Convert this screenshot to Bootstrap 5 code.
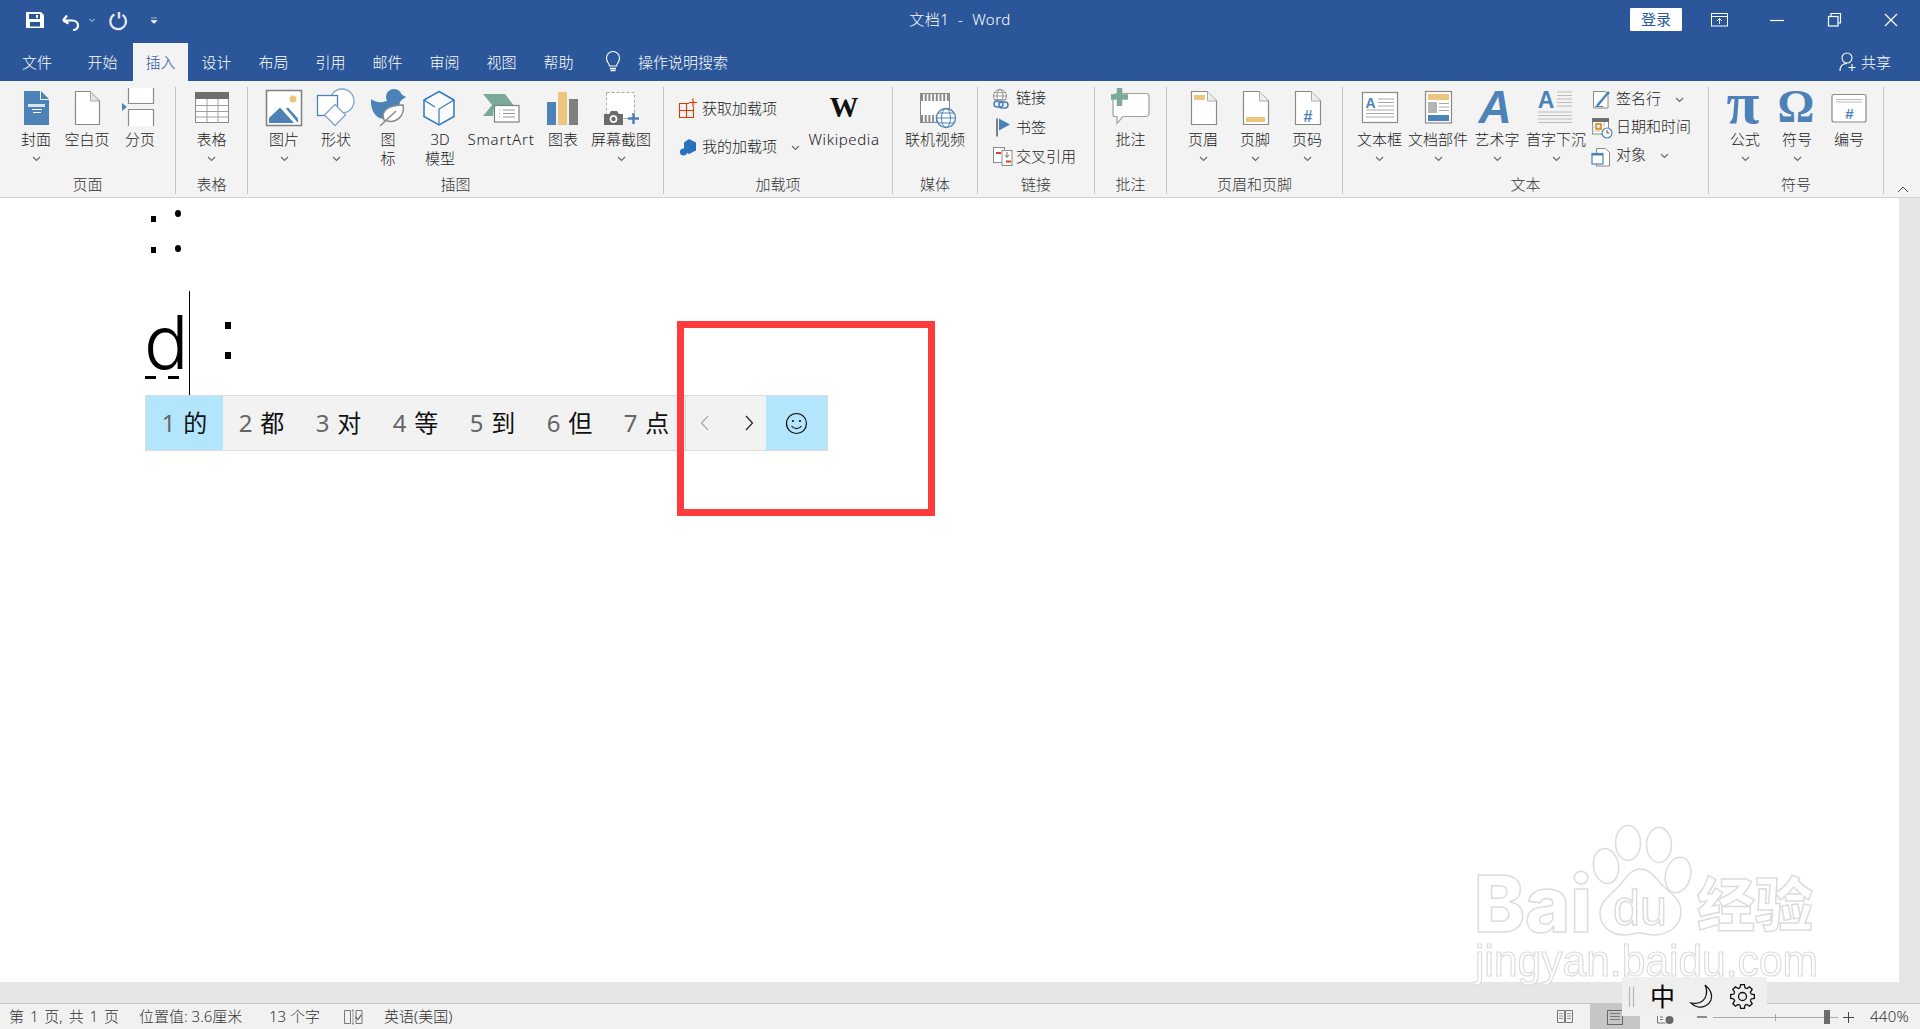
<!DOCTYPE html>
<html lang="zh-CN">
<head>
<meta charset="utf-8">
<title>文档1 - Word</title>
<link href="https://cdn.jsdelivr.net/npm/bootstrap@5.3.0/dist/css/bootstrap.min.css" rel="stylesheet">
<style>
html,body{height:100%;overflow:hidden}
body{font-family:"Noto Sans","Noto Sans CJK SC",sans-serif;font-size:15px;font-weight:300;color:#222;background:#fff}
svg{display:block;flex:none;overflow:visible}
.wd-page{width:1920px;height:1029px}
.wd-title{height:43px;background:#2b579a;color:#fff}
.wd-side{flex:1 1 0}
.wd-titletext{font-size:15px;line-height:38px;letter-spacing:.5px}
.wd-login{width:52px;height:23px;padding:0;border:0;border-radius:1px;background:#fff;color:#2b579a;font-size:15px;line-height:23px}
.wd-tabs{height:38px;background:#2b579a;color:#fff}
.wd-tab{width:57px;height:38px;padding:0;line-height:38px;text-align:center;color:#fff}
.wd-tab-first{width:74px}
.wd-tab-on{width:55px;background:#f3f3f3;color:#2b579a;margin-left:2px}
.wd-search{margin-left:17px;gap:16px;line-height:38px}
.wd-share{gap:4px;padding-right:29px;line-height:38px}
.wd-ribbon{height:117px;background:#f3f3f3;border-bottom:1px solid #d4d4d4;padding-top:6px}
.wd-grp{height:107px;border-right:1px solid #c4c4c4}
.wd-grp-name{line-height:19px;text-align:center;color:#333}
.wd-grp-top{flex:1 1 auto;padding-top:1px}
.wd-btn{line-height:19px;text-align:center;white-space:nowrap}
.wd-btn .wd-lb{height:19px;display:flex;justify-content:center;align-items:center}
.wd-btn svg+.wd-lb{margin-top:-2px}
.wd-pl{padding-left:10px}
.g72{width:72px}.g85{width:85px}.g116{width:117px}.g176{width:176px}.g416{width:416px}.g229{width:229px}
.g366{width:366px}.g175{width:175px}
.w52{width:52px}.w50{width:50px}.w56{width:56px}.w54{width:54px}.w62{width:62px}.w70{width:70px}.w72{width:72px}.w60{width:60px}.w57{width:57px}.w58{width:58px}.w84{width:84px}
.wd-lspc{letter-spacing:.8px}
.wd-lspw{letter-spacing:.6px}
.wd-row{height:24px;line-height:24px;white-space:nowrap}
.wd-row span{margin-top:-4px}
.wd-col-a{padding:9.5px 0 0 14px;width:144px;gap:14.5px}
.wd-col-b{padding:0 0 0 14px;gap:5.5px}
.wd-col-c{padding:0 0 0 5px;gap:4px}
.gp4{gap:4px}.gp3{gap:3px}.gp2px{gap:2px}
.ms11{margin-left:11px}.ms12{margin-left:12px}
.wd-collapse{flex:1 1 auto;align-self:flex-end;padding-left:13px;padding-bottom:4px}
.wd-doc{flex:1 1 auto;min-height:0}
.wd-sheet{flex:1 1 auto;background:#fff;padding-left:145px}
.wd-vbar{width:21px;background:#e6e6e6}
.wd-dots{padding-left:6px;gap:19px}
.wd-dots-a{height:12px;margin-top:12px}
.wd-dots-b{height:8px;margin-top:23px}
.wd-sq{width:5px;height:6px;background:#000}
.wd-rd{width:6px;height:7px;background:#000;border-radius:50%}
.wd-line{margin-top:38px;height:104px}
.wd-dcell{width:43px}
.wd-d{font-family:Inter,"Liberation Sans",sans-serif;font-weight:300;font-size:74px;line-height:70px;height:70px;margin:16px 0 0 -1px;color:#000}
.wd-dash{gap:12px;margin-top:-1px}
.wd-dash i{display:block;width:11px;height:3px;background:#000}
.wd-caret{width:1px;height:104px;background:#000;margin-left:1px}
.wd-colon{margin:31px 0 0 35px;gap:23px}
.wd-colon i{display:block;width:6px;height:7px;background:#000}
.wd-band{height:21px;background:#e6e6e6}
.wd-status{height:26px;background:#f1f1f1;border-top:1px solid #c6c6c6;line-height:24px;padding-left:9px;color:#333;font-size:15px}
.s130{width:130px}.s75{width:75px}.s40{width:40px}
.wd-wide{word-spacing:2px}
.wd-zoom{width:56px;text-align:left;padding-left:6px;font-size:15px;letter-spacing:.3px}
.wd-ime{left:145px;top:395px;width:683px;height:56px;background:#f2f2f2;border:1px solid #dcdcdc;font-size:24px;font-weight:400;color:#111}
.wd-cell{width:77px;gap:8px}
.wd-cell b{font-weight:400;color:#666}
.wd-cell-on{width:77px;background:#b3e5fd}
.wd-arrows{flex:1 1 auto;gap:36px;border-left:1px solid #dcdcdc;padding-left:2px}
.wd-emoji{width:61px;background:#b3e5fd}
.wd-redbox{left:677px;top:321px;width:258px;height:195px;border:7px solid #ff3b3b}
.wd-mark{left:1470px;top:825px;filter:blur(.5px)}
.wd-imetool{left:1622px;top:977px;width:145px;height:39px;background:#efefef;padding-left:7px}
.wd-zh{font-size:25px;font-weight:400;color:#000;line-height:39px;margin:0 15px}
</style>
</head>
<body>
<svg width="0" height="0" class="position-absolute">
<symbol id="chev" viewBox="0 0 9 6"><path d="M1 1l3.500 3.500L8 1" fill="none" stroke="#666" stroke-width="1.100"/></symbol>
</svg>
<div class="wd-page position-relative d-flex flex-column">

<!-- title bar -->
<div class="wd-title d-flex flex-none">
 <div class="wd-side">
  <svg width="170" height="43" viewBox="0 0 170 43">
   <path d="M26 12h15l3 3v13H26z" fill="#fff"/><rect x="29" y="14" width="11" height="5" fill="#2b579a"/><rect x="30" y="22" width="10" height="4.500" fill="#2b579a"/><rect x="36" y="15" width="2" height="3" fill="#fff"/>
   <path d="M63 20.500l4-5M63 20.500l5.500 3M63.500 20.500H72c4 0 6 2.400 6 5s-2 4.500-5 4.500" fill="none" stroke="#fff" stroke-width="2.200"/>
   <path d="M89.500 19l2.500 2.500 2.500-2.500" fill="none" stroke="#cfd9e8" stroke-width="1"/>
   <path d="M114.500 14.500a7.800 7.800 0 1 0 8 .4" fill="none" stroke="#dfe6f0" stroke-width="2.300"/><path d="M119 12v6.500" stroke="#dfe6f0" stroke-width="2.500"/>
   <path d="M151 18h6M151 20.500h6l-3 3z" fill="#fff" stroke="#fff" stroke-width=".6"/>
  </svg>
 </div>
 <div class="wd-titletext text-center text-nowrap">文档1&nbsp; - &nbsp;Word</div>
 <div class="wd-side d-flex justify-content-end">
  <button type="button" class="btn wd-login mt-2">登录</button>
  <svg width="238" height="43" viewBox="1682 0 238 43">
   <rect x="1711.500" y="13.500" width="16" height="12.500" fill="none" stroke="#fff"/><path d="M1711.500 16.500h16" stroke="#fff"/><path d="M1719.500 24v-5M1717 21l2.500-2.500 2.500 2.500" fill="none" stroke="#fff"/>
   <path d="M1770 20.500h14" stroke="#fff" stroke-width="1.200"/>
   <rect x="1828.500" y="16.500" width="9.500" height="9.500" fill="none" stroke="#fff" stroke-width="1.200"/><path d="M1831 16.500v-3h9.500v9.500h-2.500" fill="none" stroke="#fff" stroke-width="1.200"/>
   <path d="M1885 14l12 12M1897 14l-12 12" stroke="#fff" stroke-width="1.300"/>
  </svg>
 </div>
</div>

<!-- tabs -->
<div class="wd-tabs d-flex flex-none">
 <ul class="nav flex-nowrap">
  <li class="nav-item"><span class="nav-link wd-tab wd-tab-first">文件</span></li>
  <li class="nav-item"><span class="nav-link wd-tab">开始</span></li>
  <li class="nav-item"><span class="nav-link wd-tab wd-tab-on">插入</span></li>
  <li class="nav-item"><span class="nav-link wd-tab">设计</span></li>
  <li class="nav-item"><span class="nav-link wd-tab">布局</span></li>
  <li class="nav-item"><span class="nav-link wd-tab">引用</span></li>
  <li class="nav-item"><span class="nav-link wd-tab">邮件</span></li>
  <li class="nav-item"><span class="nav-link wd-tab">审阅</span></li>
  <li class="nav-item"><span class="nav-link wd-tab">视图</span></li>
  <li class="nav-item"><span class="nav-link wd-tab">帮助</span></li>
 </ul>
 <div class="wd-search d-flex align-items-center">
  <svg width="18" height="22" viewBox="604 51 18 22"><path d="M609.500 66c0-2.500-3-3.500-3-8a6.500 6.500 0 0 1 13 0c0 4.500-3 5.500-3 8z" fill="none" stroke="#fff" stroke-width="1.100"/><path d="M610 68.500h6M610.500 70.500h5" stroke="#fff" stroke-width="1.300"/></svg>
  <span>操作说明搜索</span>
 </div>
 <div class="wd-share d-flex align-items-center ms-auto">
  <svg width="18" height="20" viewBox="1840 54 18 20"><circle cx="1848" cy="60" r="5" fill="none" stroke="#fff" stroke-width="1.100"/><path d="M1841 73c0-5 3-7.500 7-7.500" fill="none" stroke="#fff" stroke-width="1.100"/><path d="M1853 66v7M1849.500 69.500h7" stroke="#fff" stroke-width="1.100"/></svg>
  <span>共享</span>
 </div>
</div>

<!-- ribbon -->
<div class="wd-ribbon d-flex flex-none">
 <!-- 页面 -->
 <div class="wd-grp g176 d-flex flex-column">
  <div class="wd-grp-top d-flex wd-pl">
   <div class="wd-btn w52"><svg width="52" height="44" viewBox="10 88 52 44">
     <path d="M24 91h16v9h9v25H24z" fill="#4d82b8"/><path d="M41 91l8 8h-8z" fill="#4d82b8"/>
     <path d="M28 104h17v3H28z" fill="#d8e4f0"/><path d="M32 109.500h10M33 112.500h8" stroke="#fff"/></svg>
    <div class="wd-lb">封面</div><div class="wd-lb"><svg width="9" height="6"><use href="#chev"/></svg></div></div>
   <div class="wd-btn w50"><svg width="50" height="44" viewBox="62 88 50 44">
     <path d="M75.500 91.500H90l9.500 9.500v23.500h-24z" fill="#fff" stroke="#8a8a8a" stroke-width="1.200"/><path d="M90.500 91.500v9.500h9z" fill="#e4e4e4" stroke="#aaa"/></svg>
    <div class="wd-lb">空白页</div></div>
   <div class="wd-btn w56"><svg width="56" height="44" viewBox="112 88 56 44">
     <path d="M122 103l5 4-5 4z" fill="#4d82b8"/><path d="M128.500 88v15.500h25V88" fill="#fff" stroke="#8a8a8a" stroke-width="1.200"/><path d="M128.500 126v-16.500h25V126" fill="#fff" stroke="#8a8a8a" stroke-width="1.200"/></svg>
    <div class="wd-lb">分页</div></div>
  </div>
  <div class="wd-grp-name">页面</div>
 </div>
 <!-- 表格 -->
 <div class="wd-grp g72 d-flex flex-column">
  <div class="wd-grp-top d-flex justify-content-center">
   <div class="wd-btn w52"><svg width="52" height="44" viewBox="186 88 52 44">
     <rect x="195.500" y="92.500" width="33" height="30" fill="#fff" stroke="#8a8a8a"/><rect x="195" y="92" width="34" height="7" fill="#6f6f6f"/>
     <path d="M207 99v23M218 99v23M196 105.500h32M196 111.500h32M196 117h32" stroke="#a0a0a0"/></svg>
    <div class="wd-lb">表格</div><div class="wd-lb"><svg width="9" height="6"><use href="#chev"/></svg></div></div>
  </div>
  <div class="wd-grp-name">表格</div>
 </div>
 <!-- 插图 -->
 <div class="wd-grp g416 d-flex flex-column">
  <div class="wd-grp-top d-flex wd-pl">
   <div class="wd-btn w52"><svg width="52" height="44" viewBox="258 88 52 44">
     <rect x="266.500" y="90.500" width="35" height="35" fill="#fff" stroke="#7f7f7f" stroke-width="1.500"/><circle cx="293" cy="99" r="3.500" fill="#edc57e"/>
     <path d="M269 123v-5l11-10.500 14 15.500z" fill="#4d82b8"/><path d="M286 108.500l2-1 10 11v4.500z" fill="#4d82b8"/></svg>
    <div class="wd-lb">图片</div><div class="wd-lb"><svg width="9" height="6"><use href="#chev"/></svg></div></div>
   <div class="wd-btn w52"><svg width="52" height="44" viewBox="310 88 52 44">
     <circle cx="342" cy="101" r="12" fill="#fff" stroke="#7fa6ce" stroke-width="1.300"/><rect x="317.500" y="95.500" width="20" height="20" fill="#fff" stroke="#4d82b8" stroke-width="1.300"/>
     <path d="M335 104.500l10.500 10.500L335 125.500 324.500 115z" fill="#fff" stroke="#7fa6ce" stroke-width="1.300"/></svg>
    <div class="wd-lb">形状</div><div class="wd-lb"><svg width="9" height="6"><use href="#chev"/></svg></div></div>
   <div class="wd-btn w52"><svg width="52" height="44" viewBox="362 88 52 44">
     <circle cx="394" cy="97" r="8" fill="#4d82b8"/><path d="M400 93.500l6 3.500-6 4z" fill="#4d82b8"/>
     <path d="M371 99c5 4 13 4 17 1h12c0 10-8 18-16 19-8 0-14-9-13-20z" fill="#4d82b8"/>
     <path d="M384 120c-4-10 6-15 19-15 2 10-6 20-19 15z" fill="#fff" stroke="#8a8a8a" stroke-width="1.500"/><path d="M380 126l16-15" stroke="#8a8a8a" stroke-width="1.500"/></svg>
    <div class="wd-lb">图</div><div class="wd-lb">标</div></div>
   <div class="wd-btn w52"><svg width="52" height="44" viewBox="414 88 52 44">
     <path d="M439 91.500l15 8.500v16.500l-15 8.500-15-8.500V100z" fill="#fafafa" stroke="#2f79bf" stroke-width="1.500"/><path d="M454 100l-15 9v16M424 100l11 7" fill="none" stroke="#2f79bf" stroke-width="1.200"/></svg>
    <div class="wd-lb">3D</div><div class="wd-lb">模型</div></div>
   <div class="wd-btn w70"><svg width="70" height="44" viewBox="466 88 70 44">
     <path d="M483 94h22l10 13h-21l-1 9h-10l9-11z" fill="#7baa98"/><rect x="494.500" y="105.500" width="24.500" height="16.500" fill="#fff" stroke="#808080" stroke-width="1.200"/>
     <path d="M499 110h1M499 113.500h1M499 117h1M503 110h12M503 113.500h12M503 117h12" stroke="#999"/></svg>
    <div class="wd-lb wd-lspc">SmartArt</div></div>
   <div class="wd-btn w54"><svg width="54" height="44" viewBox="536 88 54 44">
     <rect x="547" y="102" width="9" height="23" fill="#4d82b8"/><rect x="558" y="92" width="9" height="33" fill="#edc57e"/><rect x="569" y="99" width="9" height="26" fill="#7f7f7f"/></svg>
    <div class="wd-lb">图表</div></div>
   <div class="wd-btn w62"><svg width="62" height="44" viewBox="590 88 62 44">
     <rect x="606.500" y="92.500" width="28" height="26" fill="#fff" stroke="#aaa" stroke-dasharray="3 2"/>
     <path d="M604 114h5l2-3h6l2 3h4v11h-19z" fill="#6b6b6b"/><circle cx="613.500" cy="119" r="3.500" fill="#fff" stroke="#fff"/><circle cx="613.500" cy="119" r="2.200" fill="#6b6b6b"/>
     <path d="M624 118.500h4" stroke="#aaa"/><path d="M628 118.500h11M633.500 113v11" stroke="#4d82b8" stroke-width="2.500"/></svg>
    <div class="wd-lb">屏幕截图</div><div class="wd-lb"><svg width="9" height="6"><use href="#chev"/></svg></div></div>
  </div>
  <div class="wd-grp-name">插图</div>
 </div>
 <!-- 加载项 -->
 <div class="wd-grp g229 d-flex flex-column">
  <div class="wd-grp-top d-flex">
   <div class="wd-col-a d-flex flex-column">
    <div class="wd-row d-flex align-items-center gp2px"><svg width="22" height="24" viewBox="678 97.500 22 24">
      <path d="M679.500 103h14v14h-14zM686.500 103v14M679.500 110h14" fill="none" stroke="#d83b01" stroke-width="1.100"/><path d="M693 98v8M689 102h8" stroke="#f3f3f3" stroke-width="3"/><path d="M693 98v8M689 102h8" stroke="#d83b01" stroke-width="1.200"/></svg><span>获取加载项</span></div>
    <div class="wd-row d-flex align-items-center gp2px"><svg width="22" height="24" viewBox="678 135 22 24">
      <path d="M689 138l7 3.500v8l-7 3.500-5-2.500v-9z" fill="#2672bc"/><circle cx="683.500" cy="151" r="3.500" fill="#2672bc"/></svg><span>我的加载项</span><svg class="ms12" width="9" height="6"><use href="#chev"/></svg></div>
   </div>
   <div class="wd-btn w72"><svg width="72" height="44" viewBox="808 88 72 44"><text x="844" y="117" text-anchor="middle" font-family="Liberation Serif" font-weight="700" font-size="29" fill="#111">W</text></svg>
    <div class="wd-lb wd-lspw">Wikipedia</div></div>
  </div>
  <div class="wd-grp-name">加载项</div>
 </div>
 <!-- 媒体 -->
 <div class="wd-grp g85 d-flex flex-column">
  <div class="wd-grp-top d-flex justify-content-center">
   <div class="wd-btn w84"><svg width="84" height="44" viewBox="893 88 84 44">
     <rect x="920.500" y="93.500" width="29" height="29" fill="#fff" stroke="#8a8a8a"/><path d="M921 97.500h28M921 118.500h28" stroke="#8a8a8a" stroke-width="7" stroke-dasharray="2 1.700"/>
     <circle cx="946" cy="118" r="9.500" fill="#fff" stroke="#4d82b8" stroke-width="1.300"/><ellipse cx="946" cy="118" rx="4.500" ry="9.500" fill="none" stroke="#4d82b8"/><path d="M936.500 118h19M938 113h16M938 123h16" stroke="#4d82b8"/></svg>
    <div class="wd-lb">联机视频</div></div>
  </div>
  <div class="wd-grp-name">媒体</div>
 </div>
 <!-- 链接 -->
 <div class="wd-grp g116 d-flex flex-column">
  <div class="wd-grp-top wd-col-b d-flex flex-column">
   <div class="wd-row d-flex align-items-center gp4"><svg width="20" height="24" viewBox="992 87 20 24">
     <circle cx="1000" cy="96" r="6.500" fill="#fff" stroke="#8a8a8a"/><ellipse cx="1000" cy="96" rx="3" ry="6.500" fill="none" stroke="#8a8a8a"/><path d="M993.500 96h13M994.500 92.500h11M994.500 99.500h11" stroke="#8a8a8a" stroke-width=".8"/>
     <rect x="994" y="101" width="9" height="6" rx="3" fill="none" stroke="#4d82b8" stroke-width="1.600"/><rect x="999" y="102" width="9" height="6" rx="3" fill="none" stroke="#4d82b8" stroke-width="1.600"/></svg><span>链接</span></div>
   <div class="wd-row d-flex align-items-center gp4"><svg width="20" height="24" viewBox="992 116.500 20 24">
     <rect x="996" y="118" width="2" height="18" fill="#7f7f7f"/><path d="M999 118l11 6-11 6z" fill="#4d82b8"/></svg><span>书签</span></div>
   <div class="wd-row d-flex align-items-center gp4"><svg width="20" height="24" viewBox="992 146 20 24">
     <rect x="993.500" y="147.500" width="11" height="15" fill="#fff" stroke="#8a8a8a"/><rect x="1002" y="150.500" width="10" height="15" fill="#fff" stroke="#8a8a8a"/><path d="M996 153h5M1006 161.500h5" stroke="#d2452a" stroke-width="2"/><path d="M1007 152v5M1005 155l2 2.500 2-2.500" fill="none" stroke="#777"/></svg><span>交叉引用</span></div>
  </div>
  <div class="wd-grp-name">链接</div>
 </div>
 <!-- 批注 -->
 <div class="wd-grp g72 d-flex flex-column">
  <div class="wd-grp-top d-flex justify-content-center">
   <div class="wd-btn w72"><svg width="72" height="44" viewBox="1095 88 72 44">
     <path d="M1116 93.500h30a3 3 0 0 1 3 3v17a3 3 0 0 1-3 3h-23l-6 7v-7h-2a2 2 0 0 1-2-2V96z" fill="#fff" stroke="#a0a0a0" stroke-width="1.200"/><path d="M1119.500 88v18M1111 97h17" stroke="#7baa98" stroke-width="5.500"/></svg>
    <div class="wd-lb">批注</div></div>
  </div>
  <div class="wd-grp-name">批注</div>
 </div>
 <!-- 页眉和页脚 -->
 <div class="wd-grp g176 d-flex flex-column">
  <div class="wd-grp-top d-flex wd-pl">
   <div class="wd-btn w52"><svg width="52" height="44" viewBox="1177 88 52 44">
     <path d="M1191.500 91.500H1207l9.500 9.500v23.500h-25z" fill="#fff" stroke="#8a8a8a" stroke-width="1.200"/><path d="M1207.500 91.500v9.500h9" fill="#eee" stroke="#aaa"/><rect x="1194" y="95" width="11" height="5" fill="#edc57e"/></svg>
    <div class="wd-lb">页眉</div><div class="wd-lb"><svg width="9" height="6"><use href="#chev"/></svg></div></div>
   <div class="wd-btn w52"><svg width="52" height="44" viewBox="1229 88 52 44">
     <path d="M1243.500 91.500H1259l9.500 9.500v23.500h-25z" fill="#fff" stroke="#8a8a8a" stroke-width="1.200"/><path d="M1259.500 91.500v9.500h9" fill="#eee" stroke="#aaa"/><rect x="1246" y="117" width="19" height="5" fill="#edc57e"/></svg>
    <div class="wd-lb">页脚</div><div class="wd-lb"><svg width="9" height="6"><use href="#chev"/></svg></div></div>
   <div class="wd-btn w52"><svg width="52" height="44" viewBox="1281 88 52 44">
     <path d="M1295.500 91.500H1311l9.500 9.500v23.500h-25z" fill="#fff" stroke="#8a8a8a" stroke-width="1.200"/><path d="M1311.500 91.500v9.500h9" fill="#eee" stroke="#aaa"/><text x="1308" y="122" text-anchor="middle" font-family="Liberation Sans" font-weight="700" font-size="16" fill="#4d82b8">#</text></svg>
    <div class="wd-lb">页码</div><div class="wd-lb"><svg width="9" height="6"><use href="#chev"/></svg></div></div>
  </div>
  <div class="wd-grp-name">页眉和页脚</div>
 </div>
 <!-- 文本 -->
 <div class="wd-grp g366 d-flex flex-column">
  <div class="wd-grp-top d-flex">
   <div class="d-flex ps-2">
   <div class="wd-btn w57"><svg width="57" height="44" viewBox="1350 88 57 44">
     <rect x="1361.500" y="92.500" width="35" height="30" fill="#fff" stroke="#8a8a8a" stroke-width="1.200"/><text x="1369.500" y="108" text-anchor="middle" font-family="Liberation Sans" font-weight="700" font-size="14" fill="#4d82b8">A</text>
     <path d="M1377 99h16M1377 102.500h16M1377 106h16M1365 110h28M1365 113.500h28M1365 117h28" stroke="#aaa"/></svg>
    <div class="wd-lb">文本框</div><div class="wd-lb"><svg width="9" height="6"><use href="#chev"/></svg></div></div>
   <div class="wd-btn w60"><svg width="60" height="44" viewBox="1407 88 60 44">
     <rect x="1424.500" y="91.500" width="26" height="31.500" fill="#fff" stroke="#8a8a8a" stroke-width="1.200"/><rect x="1427" y="94" width="21" height="6" fill="#edc57e"/><rect x="1427" y="102" width="9" height="11" fill="#b5b5b5"/><path d="M1438 103.500h10M1438 107h10M1438 110.500h10" stroke="#aaa"/><rect x="1427" y="115" width="21" height="6" fill="#4d82b8"/></svg>
    <div class="wd-lb">文档部件</div><div class="wd-lb"><svg width="9" height="6"><use href="#chev"/></svg></div></div>
   <div class="wd-btn w58"><svg width="58" height="44" viewBox="1467 88 58 44">
     <text x="1494" y="123" text-anchor="middle" font-family="Liberation Sans" font-style="italic" font-weight="700" font-size="46" fill="#4d82b8">A</text></svg>
    <div class="wd-lb">艺术字</div><div class="wd-lb"><svg width="9" height="6"><use href="#chev"/></svg></div></div>
   <div class="wd-btn w60"><svg width="60" height="44" viewBox="1525 88 60 44">
     <text x="1545" y="108" text-anchor="middle" font-family="Liberation Sans" font-weight="700" font-size="23" fill="#4d82b8">A</text>
     <path d="M1556 92h15M1556 95.500h15M1556 99h15M1556 102.500h15M1556 106h15M1537 112h34M1537 115.500h34M1537 119h34M1537 122.500h34" stroke="#bbb"/></svg>
    <div class="wd-lb">首字下沉</div><div class="wd-lb"><svg width="9" height="6"><use href="#chev"/></svg></div></div>
   </div>
   <div class="wd-col-c d-flex flex-column">
    <div class="wd-row d-flex align-items-center gp3"><svg width="22" height="24" viewBox="1590 87 22 24">
      <path d="M1592.500 90.500h12l2.500 3v13.500h-14.500z" fill="#fff" stroke="#8a8a8a"/><path d="M1596 105l10-12 2-2" stroke="#4d82b8" stroke-width="2.500"/><path d="M1594 105.500h8" stroke="#4d82b8"/></svg><span>签名行</span><svg class="ms11" width="9" height="6"><use href="#chev"/></svg></div>
    <div class="wd-row d-flex align-items-center gp3"><svg width="22" height="24" viewBox="1590 115 22 24">
      <rect x="1591.500" y="118" width="16" height="15" fill="#fff" stroke="#8a8a8a"/><rect x="1591" y="117" width="17" height="4" fill="#6f6f6f"/><rect x="1595" y="123" width="5" height="5" fill="#fff" stroke="#e07b00" stroke-width="1.500"/><path d="M1591 126h8M1591 130h8M1603 121v5" stroke="#bbb"/>
      <circle cx="1606" cy="132" r="5" fill="#fff" stroke="#4d82b8" stroke-width="1.200"/><path d="M1606 129v3h2.500" fill="none" stroke="#555"/></svg><span>日期和时间</span></div>
    <div class="wd-row d-flex align-items-center gp3"><svg width="22" height="24" viewBox="1590 143 22 24">
      <path d="M1595.500 147.500h9l4 4v13.500h-13z" fill="#fff" stroke="#8a8a8a"/><rect x="1591" y="152.500" width="11" height="10.500" fill="#fff" stroke="#4d82b8" stroke-width="1.200"/><rect x="1591" y="152" width="11" height="2.500" fill="#4d82b8"/></svg><span>对象</span><svg class="ms11" width="9" height="6"><use href="#chev"/></svg></div>
   </div>
  </div>
  <div class="wd-grp-name">文本</div>
 </div>
 <!-- 符号 -->
 <div class="wd-grp g175 d-flex flex-column">
  <div class="wd-grp-top d-flex wd-pl">
   <div class="wd-btn w52"><svg width="52" height="44" viewBox="1719 88 52 44"><text x="1743" y="123" text-anchor="middle" font-family="Liberation Serif" font-weight="700" font-size="60" fill="#4d82b8">π</text></svg>
    <div class="wd-lb">公式</div><div class="wd-lb"><svg width="9" height="6"><use href="#chev"/></svg></div></div>
   <div class="wd-btn w52"><svg width="52" height="44" viewBox="1771 88 52 44"><text x="1796" y="122" text-anchor="middle" font-family="Liberation Serif" font-weight="700" font-size="46" fill="#4d82b8">Ω</text></svg>
    <div class="wd-lb">符号</div><div class="wd-lb"><svg width="9" height="6"><use href="#chev"/></svg></div></div>
   <div class="wd-btn w52"><svg width="52" height="44" viewBox="1823 88 52 44">
     <rect x="1832" y="94.500" width="34" height="27.500" rx="2" fill="#fff" stroke="#8a8a8a" stroke-width="1.200"/><path d="M1836 99.500h26M1836 102h26" stroke="#bbb"/><text x="1849.500" y="119" text-anchor="middle" font-family="Liberation Sans" font-weight="700" font-size="15" fill="#4d82b8">#</text></svg>
    <div class="wd-lb">编号</div></div>
  </div>
  <div class="wd-grp-name">符号</div>
 </div>
 <div class="wd-collapse"><svg width="12" height="7" viewBox="0 0 12 7"><path d="M1 6l5-5 5 5" fill="none" stroke="#555"/></svg></div>
</div>

<!-- document -->
<div class="wd-doc d-flex">
 <div class="wd-sheet">
  <div class="wd-dots wd-dots-a d-flex align-items-end"><span class="wd-sq"></span><span class="wd-rd align-self-start"></span></div>
  <div class="wd-dots wd-dots-b d-flex align-items-end"><span class="wd-sq"></span><span class="wd-rd align-self-start"></span></div>
  <div class="wd-line d-flex">
   <div class="wd-dcell">
    <div class="wd-d">d</div>
    <div class="wd-dash d-flex"><i></i><i></i></div>
   </div>
   <div class="wd-caret"></div>
   <div class="wd-colon d-flex flex-column"><i></i><i></i></div>
  </div>
 </div>
 <div class="wd-vbar"></div>
</div>
<div class="wd-band flex-none"></div>

<!-- status bar -->
<div class="wd-status d-flex flex-none text-nowrap">
 <span class="s130 wd-wide">第 1 页, 共 1 页</span>
 <span class="s130">位置值: 3.6厘米</span>
 <span class="s75">13 个字</span>
 <span class="s40 d-flex align-items-center"><svg width="19" height="16" viewBox="344 1010 19 16">
   <path d="M344.500 1011.500h6v13h-6zM352 1011.500h1.500M352 1024.500h1.500M356 1011.500h6v13h-6z" fill="none" stroke="#777"/><path d="M353 1010v16" stroke="#999"/><path d="M355.500 1018l2.500 2.500 3.500-5" fill="none" stroke="#666" stroke-width="1.300"/></svg></span>
 <span>英语(美国)</span>
 <svg class="ms-auto" width="324" height="25" viewBox="1540 1004 324 25">
   <path d="M1557.500 1010.500h7v12h-7zM1565.500 1010.500h7v12h-7z" fill="none" stroke="#777"/><path d="M1559 1013.500h4M1559 1016h4M1559 1018.500h4M1567 1013.500h4M1567 1016h4M1567 1018.500h4" stroke="#999"/>
   <rect x="1590" y="1004" width="50" height="25" fill="#c6c6c6"/>
   <rect x="1607.500" y="1010.500" width="15" height="14" fill="none" stroke="#666"/><path d="M1610 1013.500h10M1610 1016.500h10M1610 1019.500h10" stroke="#777"/>
   <path d="M1657.500 1015v8h8M1660 1017h3M1660 1019.500h3" fill="none" stroke="#777"/><circle cx="1669.500" cy="1020" r="4" fill="#666"/>
   <path d="M1697 1017h10" stroke="#444" stroke-width="1.200"/>
   <path d="M1713 1017.500h125" stroke="#a8a8a8"/><path d="M1775.500 1014v7" stroke="#a8a8a8"/>
   <rect x="1824" y="1010" width="6" height="14" fill="#6b6b6b"/>
   <path d="M1843 1017.500h11M1848.500 1012v11" stroke="#444"/>
 </svg>
 <span class="wd-zoom">440%</span>
</div>

<!-- candidate bar -->
<div class="wd-ime position-absolute d-flex align-items-stretch text-nowrap">
 <div class="wd-cell wd-cell-on d-flex align-items-center justify-content-center"><b>1</b><span>的</span></div>
 <div class="wd-cell d-flex align-items-center justify-content-center"><b>2</b><span>都</span></div>
 <div class="wd-cell d-flex align-items-center justify-content-center"><b>3</b><span>对</span></div>
 <div class="wd-cell d-flex align-items-center justify-content-center"><b>4</b><span>等</span></div>
 <div class="wd-cell d-flex align-items-center justify-content-center"><b>5</b><span>到</span></div>
 <div class="wd-cell d-flex align-items-center justify-content-center"><b>6</b><span>但</span></div>
 <div class="wd-cell d-flex align-items-center justify-content-center"><b>7</b><span>点</span></div>
 <div class="wd-arrows d-flex align-items-center justify-content-center">
  <svg width="9" height="16" viewBox="0 0 9 16"><path d="M8 1L1.500 8 8 15" fill="none" stroke="#aaa" stroke-width="1.200"/></svg>
  <svg width="9" height="16" viewBox="0 0 9 16"><path d="M1 1l6.500 7L1 15" fill="none" stroke="#222" stroke-width="1.200"/></svg>
 </div>
 <div class="wd-emoji d-flex align-items-center justify-content-center">
  <svg width="23" height="23" viewBox="0 0 23 23"><circle cx="11.500" cy="11.500" r="10" fill="none" stroke="#111" stroke-width="1.200"/><circle cx="8" cy="9" r="1.100" fill="#111"/><circle cx="15" cy="9" r="1.100" fill="#111"/><path d="M6.500 14c2.500 3.500 7.500 3.500 10 0" fill="none" stroke="#111" stroke-width="1.200"/></svg>
 </div>
</div>
<div class="wd-redbox position-absolute"></div>

<!-- watermark -->
<svg class="wd-mark position-absolute" width="360" height="165" viewBox="1470 825 360 165">
 <g fill="#fff" stroke="#dcdcdc" stroke-width="1.500">
  <text x="1474" y="932" font-family="Inter,Liberation Sans" font-weight="800" font-size="78" textLength="118" lengthAdjust="spacingAndGlyphs">Bai</text>
  <ellipse cx="1628" cy="843" rx="12.500" ry="17.500"/><ellipse cx="1659" cy="845" rx="12.500" ry="17.500"/>
  <ellipse cx="1606" cy="866" rx="12.500" ry="17.500" transform="rotate(-10 1606 866)"/><ellipse cx="1678" cy="875" rx="12.500" ry="18" transform="rotate(14 1678 875)"/>
  <path d="M1640 869c11 0 15 9 24 18 7 6 17 13 17 24 0 16-14 24-27 24-6 0-10-2-15-2s-9 2-15 2c-13 0-24-9-24-22 0-12 11-18 18-26 8-8 12-18 22-18z"/>
  <text x="1613" y="925" font-family="Liberation Sans" font-weight="400" font-size="50" textLength="54" lengthAdjust="spacingAndGlyphs">du</text>
  <text x="1697" y="926" font-family="Noto Sans CJK SC" font-weight="900" font-size="58">经验</text>
  <text x="1475" y="976" font-family="Liberation Sans" font-weight="400" font-size="44" textLength="343" lengthAdjust="spacingAndGlyphs" stroke-width="1.200">jingyan.baidu.com</text>
 </g>
</svg>

<!-- IME tool bar -->
<div class="wd-imetool position-absolute d-flex align-items-center">
 <svg width="6" height="20" viewBox="0 0 6 20"><path d="M.5 0v20M4.500 0v20" stroke="#b5b5b5" stroke-width="1.200"/></svg>
 <span class="wd-zh">中</span>
 <svg width="24" height="25" viewBox="0 0 24 25"><path d="M15 1c5 4 8 9 6 15-2 5-8 8-13 7-3-.5-5-2-7-4 5 1 11 0 14-5 2-4 2-9 0-13z" fill="none" stroke="#111" stroke-width="1.200"/></svg>
 <svg class="ms-3" width="25" height="25" viewBox="0 0 25 25">
  <circle cx="12.500" cy="12.500" r="4" fill="none" stroke="#111" stroke-width="1.300"/>
  <g id="gear"><path d="M21.150 10.020L24.350 10.620L24.350 14.380L21.150 14.980L20.370 16.860" fill="none" stroke="#111" stroke-width="1.300"/></g>
  <use href="#gear" transform="rotate(45 12.500 12.500)"/><use href="#gear" transform="rotate(90 12.500 12.500)"/><use href="#gear" transform="rotate(135 12.500 12.500)"/><use href="#gear" transform="rotate(180 12.500 12.500)"/><use href="#gear" transform="rotate(225 12.500 12.500)"/><use href="#gear" transform="rotate(270 12.500 12.500)"/><use href="#gear" transform="rotate(315 12.500 12.500)"/>
 </svg>
</div>

</div>
<script src="https://cdn.jsdelivr.net/npm/bootstrap@5.3.0/dist/js/bootstrap.bundle.min.js"></script>
</body>
</html>
